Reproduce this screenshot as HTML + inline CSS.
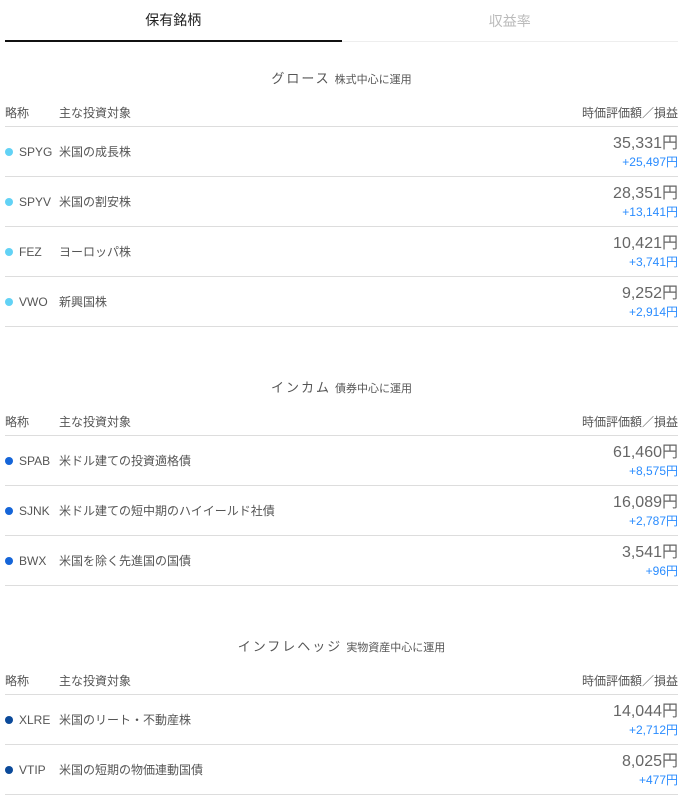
<!DOCTYPE html>
<html><head><meta charset="utf-8"><style>
*{margin:0;padding:0;box-sizing:border-box}
body{width:695px;height:810px;background:#fff;font-family:"Liberation Sans","Noto Sans CJK JP",sans-serif;color:#555;overflow:hidden}
.wrap{margin:0 17px 0 5px}
.tabs{display:flex;height:42px;border-bottom:1px solid #eee}
.tab{flex:1;text-align:center;font-size:14px;line-height:42px}
.tab.on{color:#222;border-bottom:2px solid #111;margin-bottom:-1px;line-height:40px}
.tab.off{color:#bbb}
.title{height:20px;line-height:20px;text-align:center;font-size:13px;color:#555;margin-top:51px;letter-spacing:2px}
.title small{font-size:11px;margin-left:4px;letter-spacing:0}
.hdr{display:flex;height:38px;padding-top:16px;line-height:16px;font-size:12px;border-bottom:1px solid #ddd}
.c1{width:54px}.c2{flex:1}
.row{display:flex;height:50px;border-bottom:1px solid #ddd;font-size:12px;align-items:center}
.row .c1{display:flex;align-items:center}
.dot{width:8px;height:8px;border-radius:50%;margin-right:6px;margin-top:1px}
.v{text-align:right}
.v b{display:block;font-weight:normal;font-size:16px;line-height:20px;color:#666}
.v i{display:block;font-style:normal;font-size:12px;line-height:14px;color:#2a8cff;margin-top:1px}
</style></head><body><div class="wrap">
<div class="tabs"><div class="tab on">保有銘柄</div><div class="tab off">収益率</div></div>

<div class="title" style="margin-top:27px">グロース<small>株式中心に運用</small></div>
<div class="hdr"><div class="c1">略称</div><div class="c2">主な投資対象</div><div>時価評価額／損益</div></div>
<div class="row"><div class="c1"><span class="dot" style="background:#62d2f5"></span>SPYG</div><div class="c2">米国の成長株</div><div class="v"><b>35,331円</b><i>+25,497円</i></div></div>
<div class="row"><div class="c1"><span class="dot" style="background:#62d2f5"></span>SPYV</div><div class="c2">米国の割安株</div><div class="v"><b>28,351円</b><i>+13,141円</i></div></div>
<div class="row"><div class="c1"><span class="dot" style="background:#62d2f5"></span>FEZ</div><div class="c2">ヨーロッパ株</div><div class="v"><b>10,421円</b><i>+3,741円</i></div></div>
<div class="row"><div class="c1"><span class="dot" style="background:#62d2f5"></span>VWO</div><div class="c2">新興国株</div><div class="v"><b>9,252円</b><i>+2,914円</i></div></div>

<div class="title">インカム<small>債券中心に運用</small></div>
<div class="hdr"><div class="c1">略称</div><div class="c2">主な投資対象</div><div>時価評価額／損益</div></div>
<div class="row"><div class="c1"><span class="dot" style="background:#1565d8"></span>SPAB</div><div class="c2">米ドル建ての投資適格債</div><div class="v"><b>61,460円</b><i>+8,575円</i></div></div>
<div class="row"><div class="c1"><span class="dot" style="background:#1565d8"></span>SJNK</div><div class="c2">米ドル建ての短中期のハイイールド社債</div><div class="v"><b>16,089円</b><i>+2,787円</i></div></div>
<div class="row"><div class="c1"><span class="dot" style="background:#1565d8"></span>BWX</div><div class="c2">米国を除く先進国の国債</div><div class="v"><b>3,541円</b><i>+96円</i></div></div>

<div class="title">インフレヘッジ<small>実物資産中心に運用</small></div>
<div class="hdr"><div class="c1">略称</div><div class="c2">主な投資対象</div><div>時価評価額／損益</div></div>
<div class="row"><div class="c1"><span class="dot" style="background:#0b4a9a"></span>XLRE</div><div class="c2">米国のリート・不動産株</div><div class="v"><b>14,044円</b><i>+2,712円</i></div></div>
<div class="row"><div class="c1"><span class="dot" style="background:#0b4a9a"></span>VTIP</div><div class="c2">米国の短期の物価連動国債</div><div class="v"><b>8,025円</b><i>+477円</i></div></div>
</div></body></html>
